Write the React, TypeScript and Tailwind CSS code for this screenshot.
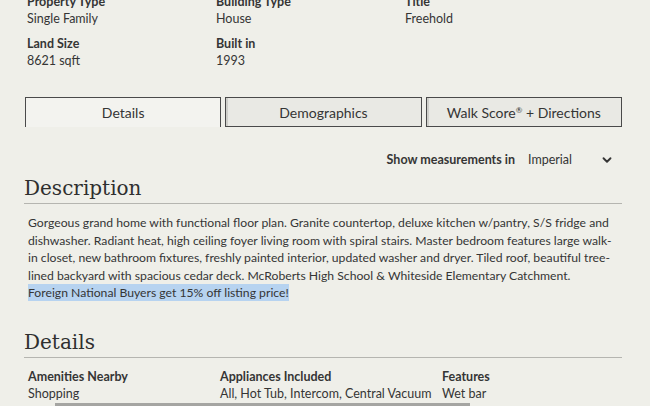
import { ChevronDown } from "lucide-react";

const facts = [
  { label: "Property Type", value: "Single Family" },
  { label: "Building Type", value: "House" },
  { label: "Title", value: "Freehold" },
  { label: "Land Size", value: "8621 sqft" },
  { label: "Built in", value: "1993" },
];

// lines are broken where the listing page breaks them
const descLines = [
  "Gorgeous grand home with functional floor plan. Granite countertop, deluxe kitchen w/pantry, S/S fridge and",
  "dishwasher. Radiant heat, high ceiling foyer living room with spiral stairs. Master bedroom features large walk-",
  "in closet, new bathroom fixtures, freshly painted interior, updated washer and dryer. Tiled roof, beautiful tree-",
  "lined backyard with spacious cedar deck. McRoberts High School & Whiteside Elementary Catchment.",
];

const SectionTitle = ({ children }: { children: React.ReactNode }) => (
  <h2 className="font-['DejaVu_Serif',serif] text-[20px] leading-[26px] text-[#2f2f2f] pb-[2px] border-b border-[#b5b5b0]">
    {children}
  </h2>
);

const tabBase = "flex-1 h-[30px] flex items-center justify-center text-[14px] border-[#4a4a4a]";

export default function App() {
  return (
    <div className="min-h-screen overflow-hidden bg-[#efefe9] text-[#353535] font-['Lato','Open_Sans',sans-serif] text-[12.5px]">
      <div className="pl-[24px] pr-[28px]">
        <div className="grid grid-cols-[189px_189px_1fr] gap-y-[8px] pl-[3px] -mt-[6px]">
          {facts.map((f) => (
            <div key={f.label}>
              <div className="font-bold leading-[16px]">{f.label}</div>
              <div className="leading-[18px]">{f.value}</div>
            </div>
          ))}
        </div>

        <div className="flex gap-[4px] mt-[27px] pl-[1px]">
          <div className={`${tabBase} bg-[#f3f3ef] border-l border-t border-r`}>Details</div>
          <div className={`${tabBase} bg-[#e9e9e4] border shadow-[inset_2px_0_0_#cfcfca]`}>Demographics</div>
          <div className={`${tabBase} bg-[#e9e9e4] border shadow-[inset_2px_0_0_#cfcfca]`}>
            <span>
              Walk Score<sup className="text-[8px] -top-[5px]">®</sup> + Directions
            </span>
          </div>
        </div>

        <div className="flex justify-end items-center mt-[24px] h-[18px] pr-[8px]">
          <span className="font-bold">Show measurements in</span>
          <span className="ml-[13px] w-[72px]">Imperial</span>
          <ChevronDown size={14} strokeWidth={3.2} />
        </div>

        <div className="mt-[6px]">
          <SectionTitle>Description</SectionTitle>
        </div>
        <div className="mt-[10px] pl-[4px] text-[12.2px] leading-[17.5px] whitespace-nowrap">
          {descLines.map((l) => (
            <div key={l}>{l}</div>
          ))}
          <div>
            <span className="bg-[#b7d3f0] py-[1px]">Foreign National Buyers get 15% off listing price!</span>
          </div>
        </div>

        <div className="mt-[27px]">
          <SectionTitle>Details</SectionTitle>
        </div>
        <div className="flex mt-[10px] pl-[4px]">
          <div className="w-[192px]">
            <div className="font-bold leading-[17px]">Amenities Nearby</div>
            <div className="leading-[17px]">Shopping</div>
          </div>
          <div className="w-[222px]">
            <div className="font-bold leading-[17px]">Appliances Included</div>
            <div className="leading-[17px]">All, Hot Tub, Intercom, Central Vacuum</div>
          </div>
          <div>
            <div className="font-bold leading-[17px]">Features</div>
            <div className="leading-[17px]">Wet bar</div>
          </div>
        </div>
        <div className="ml-[31px] mt-[1px] w-[415px] h-[3px] bg-[#a5a5a2]" />
      </div>
    </div>
  );
}
